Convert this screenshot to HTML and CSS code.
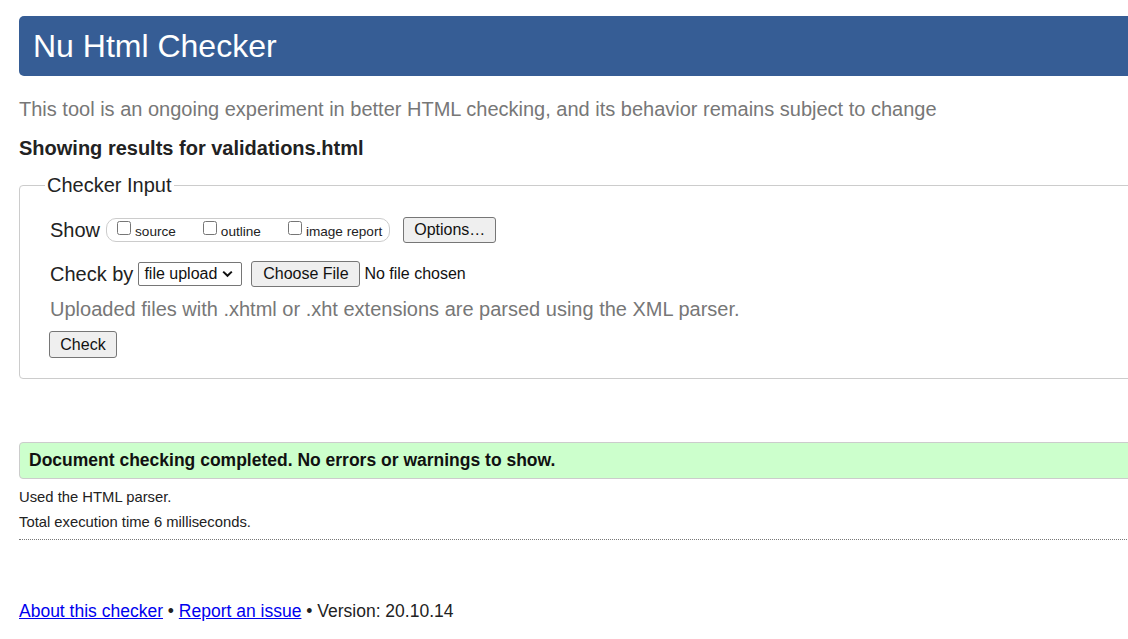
FILE: index.html
```html
<!DOCTYPE html>
<html lang="en">
<head>
<meta charset="utf-8">
<title>Showing results for validations.html - Nu Html Checker</title>
<link rel="stylesheet" href="styles.css">
</head>
<body>
<div class="page">
  <h1 class="banner">Nu Html Checker</h1>
  <p class="intro">This tool is an ongoing experiment in better HTML checking, and its behavior remains subject to change</p>
  <h2 class="results-title">Showing results for validations.html</h2>

  <fieldset class="checker">
    <legend class="checker-legend">Checker Input</legend>
    <div class="row row-show">
      <span class="row-label">Show</span>
      <span class="show-group">
        <label class="opt"><input type="checkbox" class="cb"><span>source</span></label>
        <label class="opt"><input type="checkbox" class="cb"><span>outline</span></label>
        <label class="opt"><input type="checkbox" class="cb"><span>image report</span></label>
      </span>
      <button class="btn btn-options" type="button">Options…</button>
    </div>
    <div class="row row-check">
      <span class="row-label">Check by</span>
      <span class="select">file upload
        <svg class="chev" width="11" height="8" viewBox="0 0 11 8"><path d="M1.2 1.6 L5.5 5.8 L9.8 1.6" fill="none" stroke="#111" stroke-width="2"/></svg>
      </span>
      <button class="btn btn-file" type="button">Choose File</button>
      <span class="no-file">No file chosen</span>
    </div>
    <p class="upload-note">Uploaded files with .xhtml or .xht extensions are parsed using the XML parser.</p>
    <button class="btn btn-check" type="button">Check</button>
  </fieldset>

  <div class="success">Document checking completed. No errors or warnings to show.</div>
  <p class="meta meta-parser">Used the HTML parser.</p>
  <p class="meta meta-time">Total execution time 6 milliseconds.</p>
  <hr class="divider">

  <p class="footer"><a href="#">About this checker</a> • <a href="#">Report an issue</a> • Version: 20.10.14</p>
</div>
</body>
</html>
```
FILE: styles.css
```css
html, body {
  margin: 0;
  padding: 0;
  overflow: hidden;
  background: #fff;
}
body {
  font-family: "Liberation Sans", Arial, sans-serif;
  color: #222;
}
.page {
  width: 1300px;
  padding: 16px 0 0 19px;
}
.banner {
  margin: 0;
  height: 60px;
  line-height: 60px;
  padding-left: 14px;
  background: #365d95;
  color: #fff;
  font-size: 32px;
  font-weight: normal;
  border-radius: 5px;
}
.intro {
  margin: 22px 0 0;
  font-size: 20px;
  line-height: 23px;
  color: #777;
}
.results-title {
  margin: 16px 0 0;
  font-size: 20px;
  line-height: 23px;
  font-weight: bold;
  color: #222;
}
.checker {
  margin: 14px 0 0;
  padding: 0 0 20px 30px;
  border: 1px solid #ccc;
  border-radius: 4px;
  min-width: 0;
}
.checker-legend {
  font-size: 20px;
  line-height: 23px;
  padding: 0 2px;
  margin-left: -5px;
  color: #222;
}
.row {
  display: flex;
  align-items: center;
  height: 28px;
}
.row-show {
  margin-top: 19px;
}
.row-check {
  margin-top: 16px;
}
.row-label {
  font-size: 20px;
  color: #222;
}
.show-group {
  display: flex;
  align-items: center;
  height: 22px;
  margin-left: 6px;
  padding: 0 7px 0 6px;
  border: 1px solid #ccc;
  border-radius: 10px;
  font-size: 13.6px;
}
.opt {
  display: flex;
  align-items: center;
  margin-right: 23px;
}
.opt:last-child {
  margin-right: 0;
}
.cb {
  width: 14px;
  height: 14px;
  margin: 0 4px 4px 4px;
}
.opt span {
  position: relative;
  top: 1px;
}
.btn {
  font-family: "Liberation Sans", Arial, sans-serif;
  font-size: 16px;
  color: #111;
  background: #efefef;
  border: 1px solid #767676;
  border-radius: 3px;
  padding: 0 9px;
  height: 26px;
  line-height: 24px;
}
.btn-options {
  margin-left: 13px;
  padding: 0 10px;
}
.select {
  display: inline-flex;
  align-items: center;
  margin-left: 5px;
  height: 24px;
  box-sizing: border-box;
  width: 104px;
  padding: 0 0 0 5px;
  border: 1px solid #767676;
  border-radius: 2px;
  font-size: 16px;
  color: #111;
}
.chev {
  margin-left: 5px;
}
.btn-file {
  margin-left: 9px;
  width: 109px;
  padding: 0;
}
.no-file {
  margin-left: 4px;
  font-size: 16px;
  color: #111;
}
.upload-note {
  margin: 10px 0 0;
  font-size: 20px;
  line-height: 23px;
  color: #777;
}
.btn-check {
  display: block;
  margin: 10px 0 0 -1px;
  height: 27px;
  width: 68px;
  padding: 0;
}
.success {
  margin-top: 63px;
  height: 37px;
  box-sizing: border-box;
  line-height: 35px;
  padding-left: 9px;
  background: #ccffcc;
  border: 1px solid #ccc;
  border-radius: 4px;
  font-size: 17.5px;
  font-weight: bold;
  color: #111;
}
.meta {
  margin: 0;
  font-size: 14.8px;
  line-height: 20px;
  color: #222;
}
.meta-parser {
  margin-top: 8px;
}
.meta-time {
  margin-top: 5px;
}
.divider {
  margin: 7px 0 0;
  border: 0;
  border-top: 1px dotted #777;
  height: 0;
}
.footer {
  margin: 61px 0 0;
  font-size: 17.5px;
  line-height: 21px;
  color: #222;
}
.footer a {
  color: #0000ee;
}
```
